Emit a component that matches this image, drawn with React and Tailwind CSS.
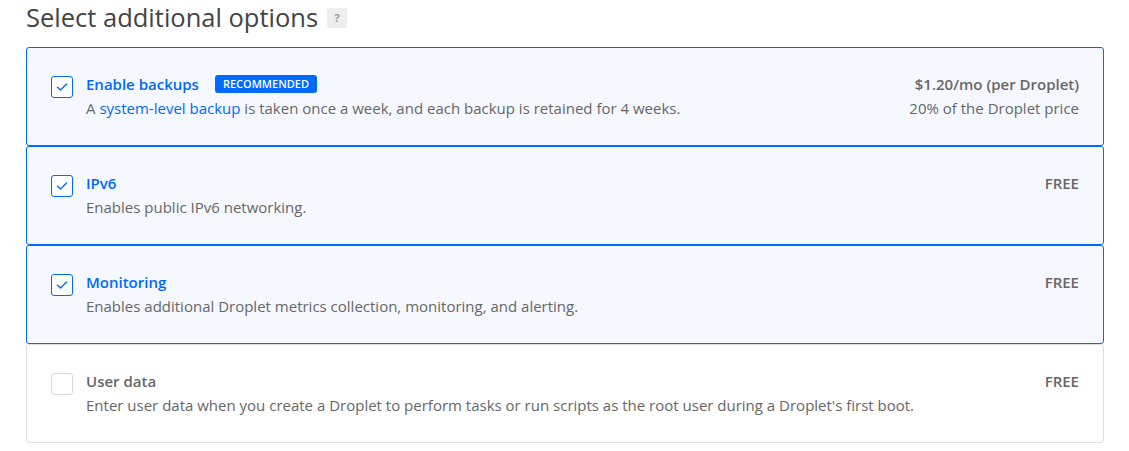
import React from "react";

function Check({ on }) {
  return (
    <div
      className={
        "w-[22px] h-[22px] shrink-0 rounded-[3px] border flex items-center justify-center bg-white " +
        (on ? "border-[#0069ff]" : "border-[#d9d9d9]")
      }
    >
      {on && (
        <svg width="12" height="10" viewBox="0 0 12 10" fill="none">
          <path d="M1.5 5.2 L4.5 8 L10.5 2" stroke="#0069ff" strokeWidth="1.4" strokeLinecap="round" strokeLinejoin="round" />
        </svg>
      )}
    </div>
  );
}

function Card({ on, title, badge, desc, right, right2 }) {
  return (
    <div
      className={
        "h-[99px] border rounded-[3px] flex items-start pl-6 pr-6 pt-[28px] " +
        (on ? "border-[#0069ff] bg-[#f5f8ff]" : "border-[#dfdfdf] bg-white")
      }
    >
      <Check on={on} />
      <div className="ml-[13px] flex-1 -mt-[2px]">
        <div className="flex items-center h-[20px]">
          <span className={"text-[15px] font-semibold " + (on ? "text-[#0069ff]" : "text-[#676767]")}>{title}</span>
          {badge && (
            <span className="ml-4 bg-[#0069ff] text-white text-[11px] font-semibold rounded-[3px] h-[18px] px-[8px] flex items-center">
              {badge}
            </span>
          )}
        </div>
        <div className="text-[15px] text-[#676767] mt-[4px] leading-[20px]">{desc}</div>
      </div>
      <div className="text-right -mt-[2px]">
        <div className="text-[15px] font-semibold text-[#676767] leading-[20px] h-[20px]">{right}</div>
        {right2 && <div className="text-[15px] text-[#676767] mt-[4px] leading-[20px]">{right2}</div>}
      </div>
    </div>
  );
}

export default function App() {
  return (
    <div className="bg-white w-[1129px] h-[451px] pl-[26px] pr-[25px]" style={{ fontFamily: '"Open Sans", "Lato", sans-serif' }}>
      <div className="flex items-center h-[40px] -mt-[2px]">
        <h2 className="text-[25.5px] text-[#444] leading-none">Select additional options</h2>
        <span className="ml-[9px] w-[20px] h-[20px] bg-[#eeeeee] rounded-[2px] text-[11px] text-[#999] font-bold flex items-center justify-center">?</span>
      </div>
      <div className="mt-[9px] flex flex-col">
        <Card
          on
          title="Enable backups"
          badge="RECOMMENDED"
          desc={
            <>
              A <span className="text-[#0069ff]">system-level backup</span> is taken once a week, and each backup is retained for 4 weeks.
            </>
          }
          right="$1.20/mo (per Droplet)"
          right2="20% of the Droplet price"
        />
        <Card on title="IPv6" desc="Enables public IPv6 networking." right="FREE" />
        <Card on title="Monitoring" desc="Enables additional Droplet metrics collection, monitoring, and alerting." right="FREE" />
        <Card
          title="User data"
          desc="Enter user data when you create a Droplet to perform tasks or run scripts as the root user during a Droplet's first boot."
          right="FREE"
        />
      </div>
    </div>
  );
}
